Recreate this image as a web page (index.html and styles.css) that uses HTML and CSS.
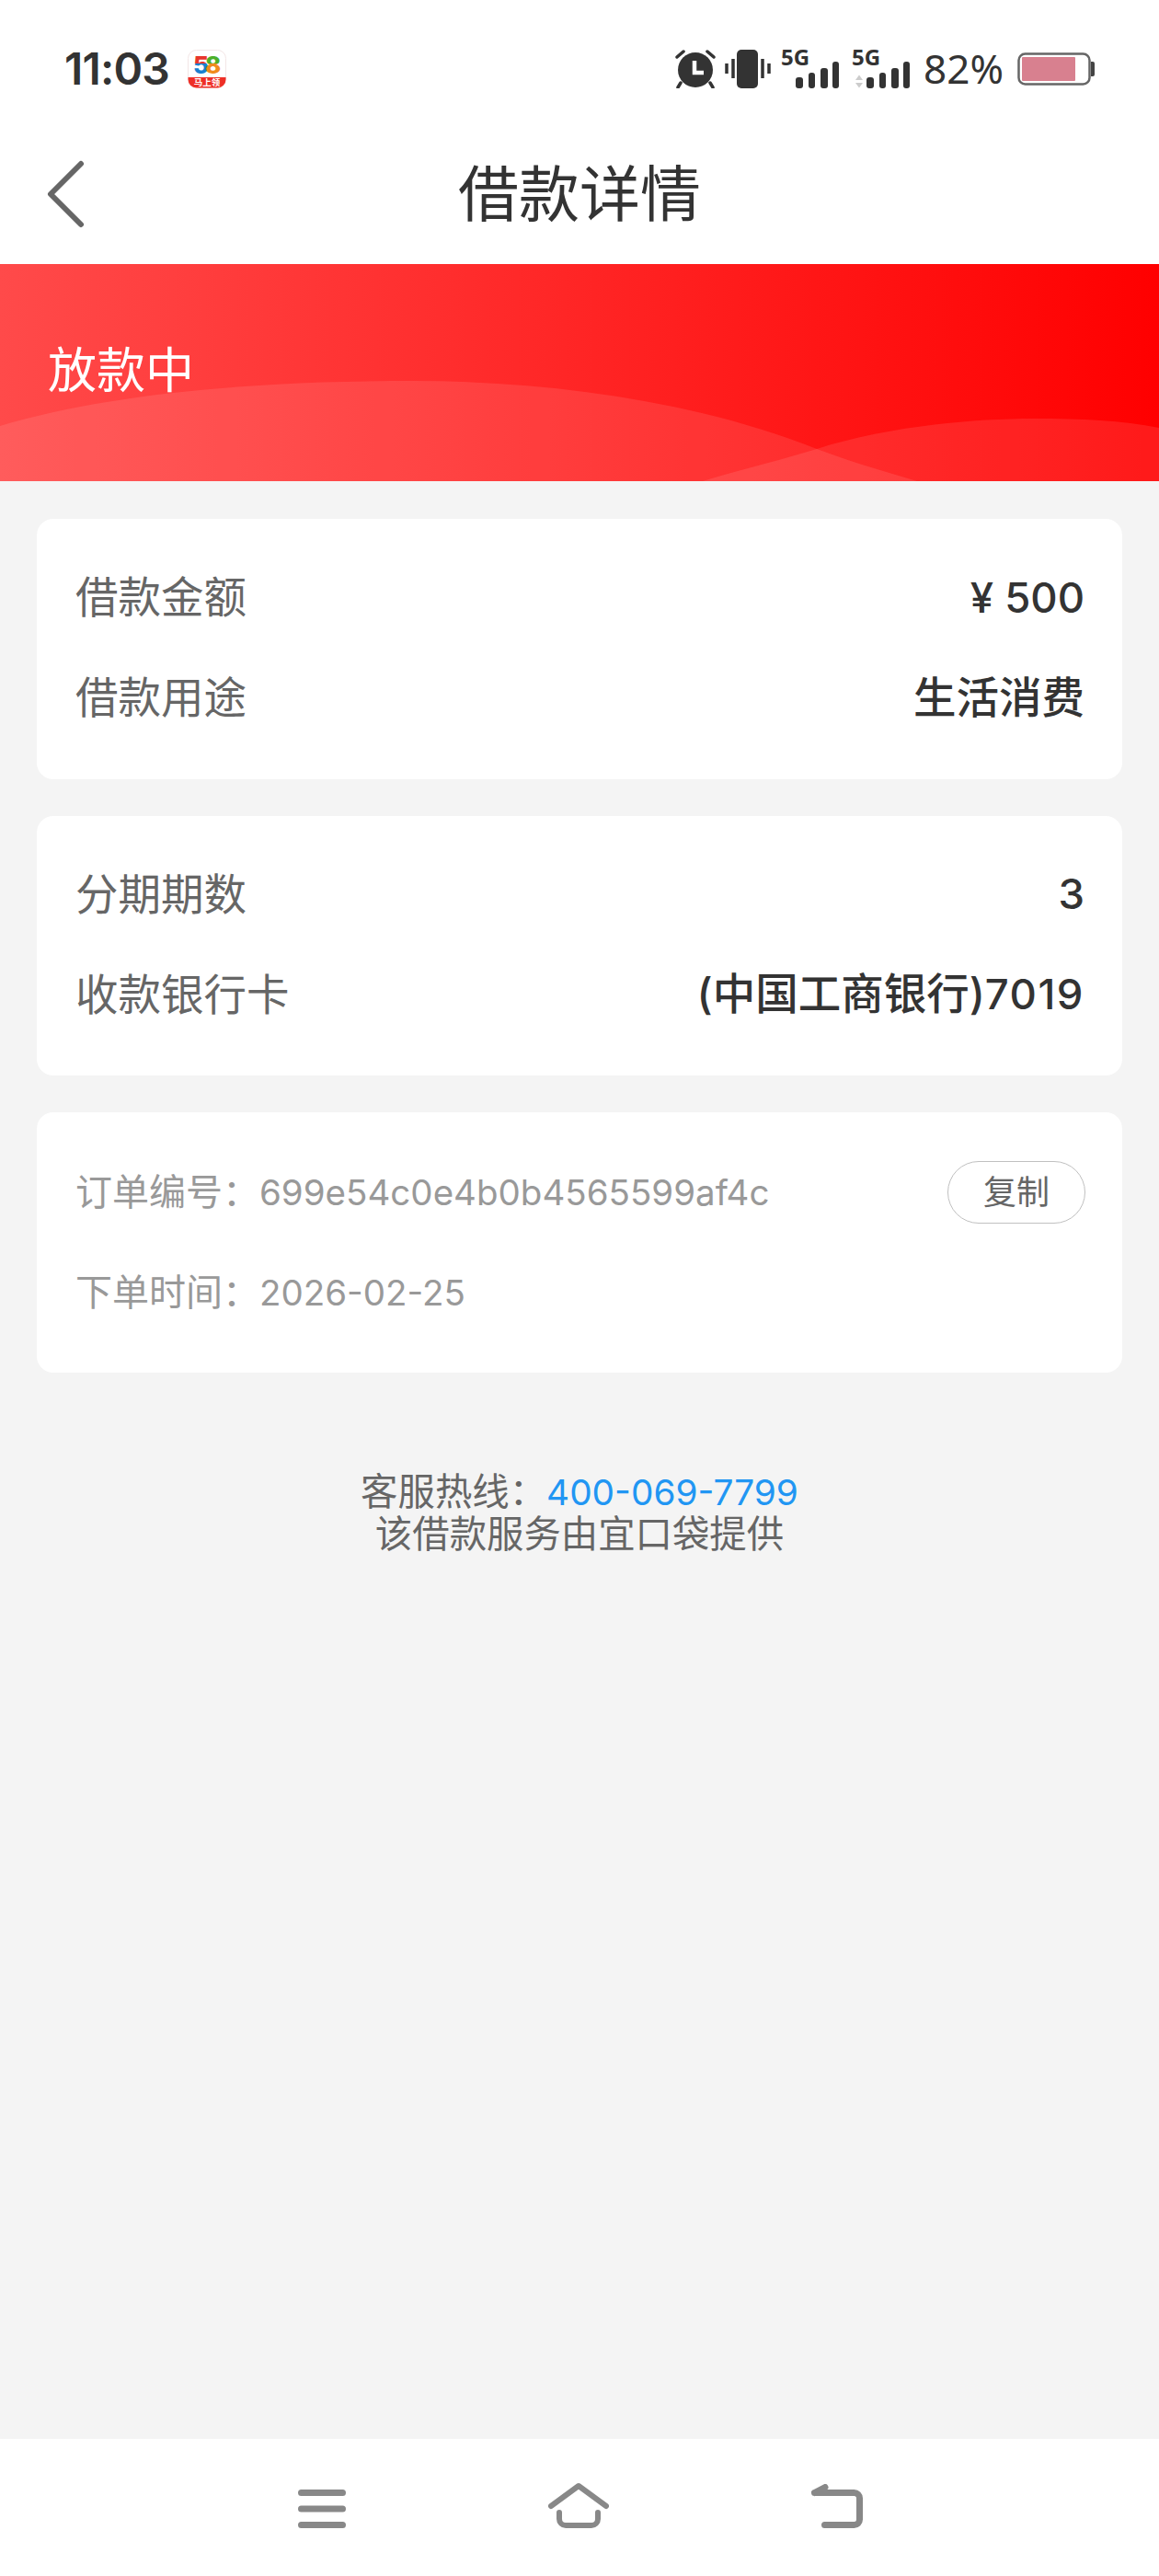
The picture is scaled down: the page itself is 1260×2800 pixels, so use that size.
FILE: index.html
```html
<!DOCTYPE html>
<html lang="zh-CN">
<head>
<meta charset="utf-8">
<title>借款详情</title>
<link rel="stylesheet" href="styles.css">
</head>
<body>
<div class="page">
  <header class="status">
    <div class="status-left">
      <span class="time">11:03</span>
      <svg class="app-icon" width="42" height="42" viewBox="0 0 42 42">
        <defs>
          <linearGradient id="five" gradientUnits="userSpaceOnUse" x1="0" x2="0" y1="6" y2="26">
            <stop offset=".45" stop-color="#e8352b"/><stop offset=".45" stop-color="#1a7fd0"/>
          </linearGradient>
          <linearGradient id="eight" gradientUnits="userSpaceOnUse" x1="0" x2="0" y1="6" y2="26">
            <stop offset=".45" stop-color="#4caf2a"/><stop offset=".45" stop-color="#f08a1c"/>
          </linearGradient>
        </defs>
        <rect x="0.500" y="0.500" width="41" height="41" rx="9" fill="#fff" stroke="#f3e6e6"/>
        <path d="M0.500 30H41.500V32.500a9 9 0 0 1-9 9H9.500a9 9 0 0 1-9-9Z" fill="#ee2f27"/>
        <text x="6" y="26" class="n5">5</text>
        <text x="19" y="26" class="n8">8</text>
        <text x="21" y="39" text-anchor="middle" class="ms">马上领</text>
      </svg>
    </div>
    <div class="status-right">
      <svg class="alarm" width="44" height="42" viewBox="0 0 44 42">
        <circle cx="22" cy="22" r="19" fill="#333"/>
        <path d="M2 8 9 2M42 8 35 2M6 36 3 41M38 36 41 41" stroke="#333" stroke-width="3.500" stroke-linecap="round" fill="none"/>
        <path d="M21 12V25H31" stroke="#fff" stroke-width="4.500" fill="none"/>
      </svg>
      <svg class="vib" width="50" height="42" viewBox="0 0 50 42">
        <rect x="13" y="0" width="23" height="42" rx="5" fill="#333"/>
        <path d="M2 15V26M9 10V31M41 10V31M48 15V26" stroke="#333" stroke-width="3.500" fill="none"/>
      </svg>
      <svg class="sig" width="64" height="58" viewBox="0 -8 64 58">
        <text x="0" y="17" class="fg">5G</text>
        <rect x="16" y="30" width="8" height="12" rx="3" fill="#333"/>
        <rect x="30" y="25" width="7" height="17" rx="3" fill="#333"/>
        <rect x="43" y="20" width="8" height="22" rx="3" fill="#333"/>
        <rect x="56" y="13" width="7" height="29" rx="3" fill="#333"/>
      </svg>
      <svg class="sig" width="64" height="58" viewBox="0 -8 64 58">
        <text x="0" y="17" class="fg">5G</text>
        <path d="M4 33 8 27.500 12 33ZM4 36 8 41.500 12 36Z" fill="#ccc"/>
        <rect x="16" y="30" width="8" height="12" rx="3" fill="#333"/>
        <rect x="30" y="25" width="7" height="17" rx="3" fill="#333"/>
        <rect x="43" y="20" width="8" height="22" rx="3" fill="#333"/>
        <rect x="56" y="13" width="7" height="29" rx="3" fill="#333"/>
      </svg>
      <span class="pct">82%</span>
      <svg class="batt" width="84" height="36" viewBox="0 0 84 36">
        <rect x="1.500" y="1.500" width="77" height="33" rx="7" fill="#fff" stroke="#666" stroke-width="2.500"/>
        <rect x="5" y="5" width="58" height="26" rx="1" fill="#d8808f"/>
        <path d="M80 10H82a2 2 0 0 1 2 2V24a2 2 0 0 1-2 2H80Z" fill="#444"/>
      </svg>
    </div>
  </header>

  <nav class="titlebar">
    <svg class="back" width="42" height="76" viewBox="0 0 42 76">
      <path d="M37 5 4 38 37 71" stroke="#666" stroke-width="6" stroke-linecap="round" stroke-linejoin="round" fill="none"/>
    </svg>
    <h1 class="title">借款详情</h1>
  </nav>

  <section class="banner">
    <svg class="waves" width="1260" height="236" viewBox="0 0 1260 236">
      <path d="M0 176C120 140 280 127 450 127 600 127 760 150 888 201 925 215 960 225 997 236H0Z" class="wave"/>
      <path d="M764 236C800 225 845 214 888 201 960 178 1050 168 1125 168 1175 168 1220 170 1260 178V236Z" class="wave"/>
    </svg>
    <span class="banner-text">放款中</span>
  </section>

  <main class="content">
    <section class="card">
      <div class="row"><span class="label">借款金额</span><span class="value"><span class="vnum">¥ 500</span></span></div>
      <div class="row"><span class="label">借款用途</span><span class="value">生活消费</span></div>
    </section>
    <section class="card">
      <div class="row"><span class="label">分期期数</span><span class="value"><span class="vnum">3</span></span></div>
      <div class="row"><span class="label">收款银行卡</span><span class="value">(中国工商银行)<span class="vnum tail">7019</span></span></div>
    </section>
    <section class="card">
      <div class="row"><span class="meta">订单编号：<span class="num">699e54c0e4b0b4565599af4c</span></span><button class="copy">复制</button></div>
      <div class="row"><span class="meta">下单时间：<span class="num">2026-02-25</span></span></div>
    </section>
    <footer class="hotline">
      <p class="line">客服热线：<span class="tel">400-069-7799</span></p>
      <p class="line">该借款服务由宜口袋提供</p>
    </footer>
  </main>

  <div class="sysnav">
    <svg class="nav-menu" width="52" height="42" viewBox="0 0 52 42">
      <path d="M3.500 3.500H48.500M3.500 21H48.500M3.500 38.500H48.500" stroke="#888" stroke-width="7" stroke-linecap="round" fill="none"/>
    </svg>
    <svg width="66" height="50" viewBox="0 0 66 50">
      <path d="M3 26 33 4 63 26" stroke="#888" stroke-width="6" stroke-linecap="round" stroke-linejoin="round" fill="none"/>
      <path d="M12 33V40a7 7 0 0 0 7 7H47a7 7 0 0 0 7-7V33" stroke="#888" stroke-width="6" stroke-linecap="round" fill="none"/>
    </svg>
    <svg class="nav-back" width="56" height="48" viewBox="0 0 56 48">
      <path d="M14.500 44.500H46.500a6 6 0 0 0 6-6V15.500a6 6 0 0 0-6-6H3.500M3.500 9.500 15 3.500" stroke="#888" stroke-width="7" stroke-linecap="round" stroke-linejoin="round" fill="none"/>
    </svg>
  </div>
</div>
</body>
</html>
```
FILE: styles.css
```css
* { box-sizing: border-box; }
html, body { margin: 0; padding: 0; }
body {
  width: 1260px;
  height: 2800px;
  background: #f4f4f4;
  font-family: "Inter", "Noto Sans CJK SC", sans-serif;
  color: #333;
}
.page { display: flex; flex-direction: column; height: 2800px; }

.status {
  height: 130px;
  background: #fff;
  display: flex;
  justify-content: space-between;
  align-items: center;
  padding: 20px 70px 0 70px;
  flex: none;
}
.status-left { display: flex; align-items: center; gap: 20px; }
.time { font-size: 48px; line-height: 50px; font-weight: 600; letter-spacing: -.8px; color: #333; }
.status-right { display: flex; align-items: center; }
.alarm { margin-right: 10px; }
.vib { margin-right: 11px; }
.sig { margin-right: 13px; }
.pct { font-family: "Noto Sans", sans-serif; font-size: 44px; line-height: 44px; color: #333; margin-left: 1px; margin-right: 15px; padding-bottom: 2px; }
.n5, .n8 { font-size: 26px; font-weight: 800; }
.n5 { fill: url(#five); }
.n8 { fill: url(#eight); }
.ms { font-size: 9.500px; font-weight: 700; fill: #fff; font-family: "Noto Sans CJK SC", sans-serif; }
.fg { font-size: 24px; font-weight: 700; fill: #333; font-family: "Noto Sans", sans-serif; }

.titlebar {
  height: 157px;
  padding-top: 5px;
  background: #fff;
  position: relative;
  display: flex;
  align-items: center;
  justify-content: center;
  flex: none;
}
.back { position: absolute; left: 51px; top: 43px; }
.title { margin: 0; font-size: 66px; line-height: 90px; font-weight: 400; color: #333; }

.banner {
  height: 236px;
  position: relative;
  background: linear-gradient(90deg, #ff4a4a 0%, #ff0000 100%);
  padding: 85px 0 0 52px;
  flex: none;
  overflow: hidden;
}
.waves { position: absolute; left: 0; top: 0; }
.wave { fill: #fff; fill-opacity: .1; }
.banner-text { position: relative; display: block; font-size: 53px; line-height: 62px; color: #fff; }

.content {
  flex: 1;
  padding: 41px 40px 0;
  display: flex;
  flex-direction: column;
  gap: 40px;
}
.card {
  background: #fff;
  border-radius: 18px;
  padding: 32px 41px 32px 42px;
}
.row {
  height: 109.250px;
  display: flex;
  justify-content: space-between;
  align-items: center;
}
.label { font-size: 46.500px; line-height: 60px; padding-bottom: 3px; color: #666; }
.value { font-size: 46.500px; line-height: 60px; padding-bottom: 3px; font-weight: 500; color: #333; }
.vnum { font-size: 45.500px; font-weight: 450; }
.tail { letter-spacing: 1.500px; }
.meta { font-size: 40px; line-height: 60px; color: #999; }
.num { font-size: 38.500px; }
.copy {
  width: 150px;
  height: 68px;
  margin-right: -1px;
  border: 1.500px solid #c0c0c0;
  border-radius: 34px;
  background: #fff;
  font: inherit;
  font-size: 36px;
  color: #666;
  padding: 0 0 6px;
}
.hotline { margin-top: 67px; text-align: center; }
.line { margin: 0; font-size: 40.400px; line-height: 46px; color: #666; }
.tel { font-size: 38.800px; color: #2196f3; }

.sysnav {
  height: 149px;
  background: #fff;
  flex: none;
  display: flex;
  align-items: flex-start;
  justify-content: space-between;
  padding: 47px 322px 0 324px;
}
.nav-menu { margin-top: 8px; }
.nav-back { margin-top: 2px; }
```
